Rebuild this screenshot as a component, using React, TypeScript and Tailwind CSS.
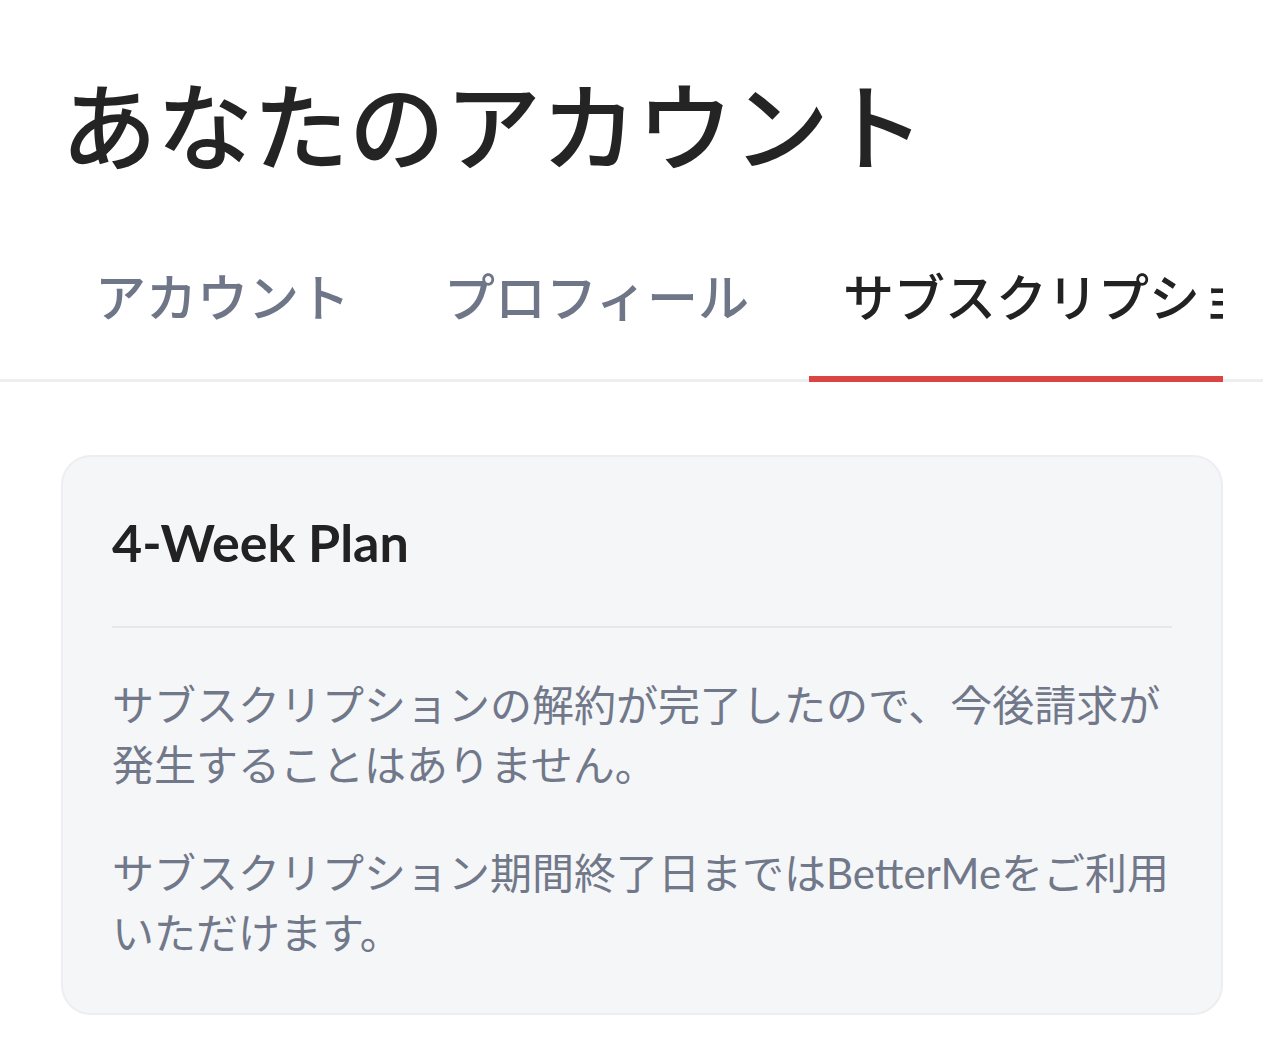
import React from 'react';

const tabs = [
  { label: 'アカウント', active: false },
  { label: 'プロフィール', active: false },
  { label: 'サブスクリプション', active: true },
];

const jp = { fontFamily: '"Noto Sans CJK JP", sans-serif' };
const mixed = { fontFamily: 'Lato, "Noto Sans CJK JP", sans-serif' };

const App: React.FC = () => {
  return (
    <div className="w-full h-[1044px] bg-white overflow-hidden" style={jp}>
      <h1 className="ml-[61px] mt-[74px] mb-[62px] text-[96px] leading-none font-medium text-[#242424] whitespace-nowrap">
        あなたのアカウント
      </h1>

      <div className="border-b-[3px] border-[#eeeeee]">
        <div className="ml-[61px] w-[1162px] overflow-hidden flex gap-[26px] -mb-[3px]">
          {tabs.map((t) => (
            <div
              key={t.label}
              className={`shrink-0 px-[34px] pt-[38px] pb-[55px] border-b-[6px] text-[51px] leading-none font-medium whitespace-nowrap ${
                t.active ? 'border-[#dc4444] text-[#222222]' : 'border-transparent text-[#6f7687]'
              }`}
            >
              {t.label}
            </div>
          ))}
        </div>
      </div>

      <div className="ml-[61px] mt-[73px] w-[1162px] rounded-[30px] border-2 border-[#eceef1] bg-[#f5f6f8] px-[49px] pt-[55px] pb-[50px]">
        <h2 className="text-[52px] leading-[60px] font-bold text-[#222222]" style={mixed}>
          4-Week Plan
        </h2>
        <div className="mt-[54px] h-[2px] bg-[#e6e8ec]" />
        <div className="mt-[47px] text-[42px] leading-[60px] text-[#717889]" style={mixed}>
          <p>サブスクリプションの解約が完了したので、今後請求が発生することはありません。</p>
          <p className="mt-[48px]">サブスクリプション期間終了日まではBetterMeをご利用いただけます。</p>
        </div>
      </div>
    </div>
  );
};

export default App;
